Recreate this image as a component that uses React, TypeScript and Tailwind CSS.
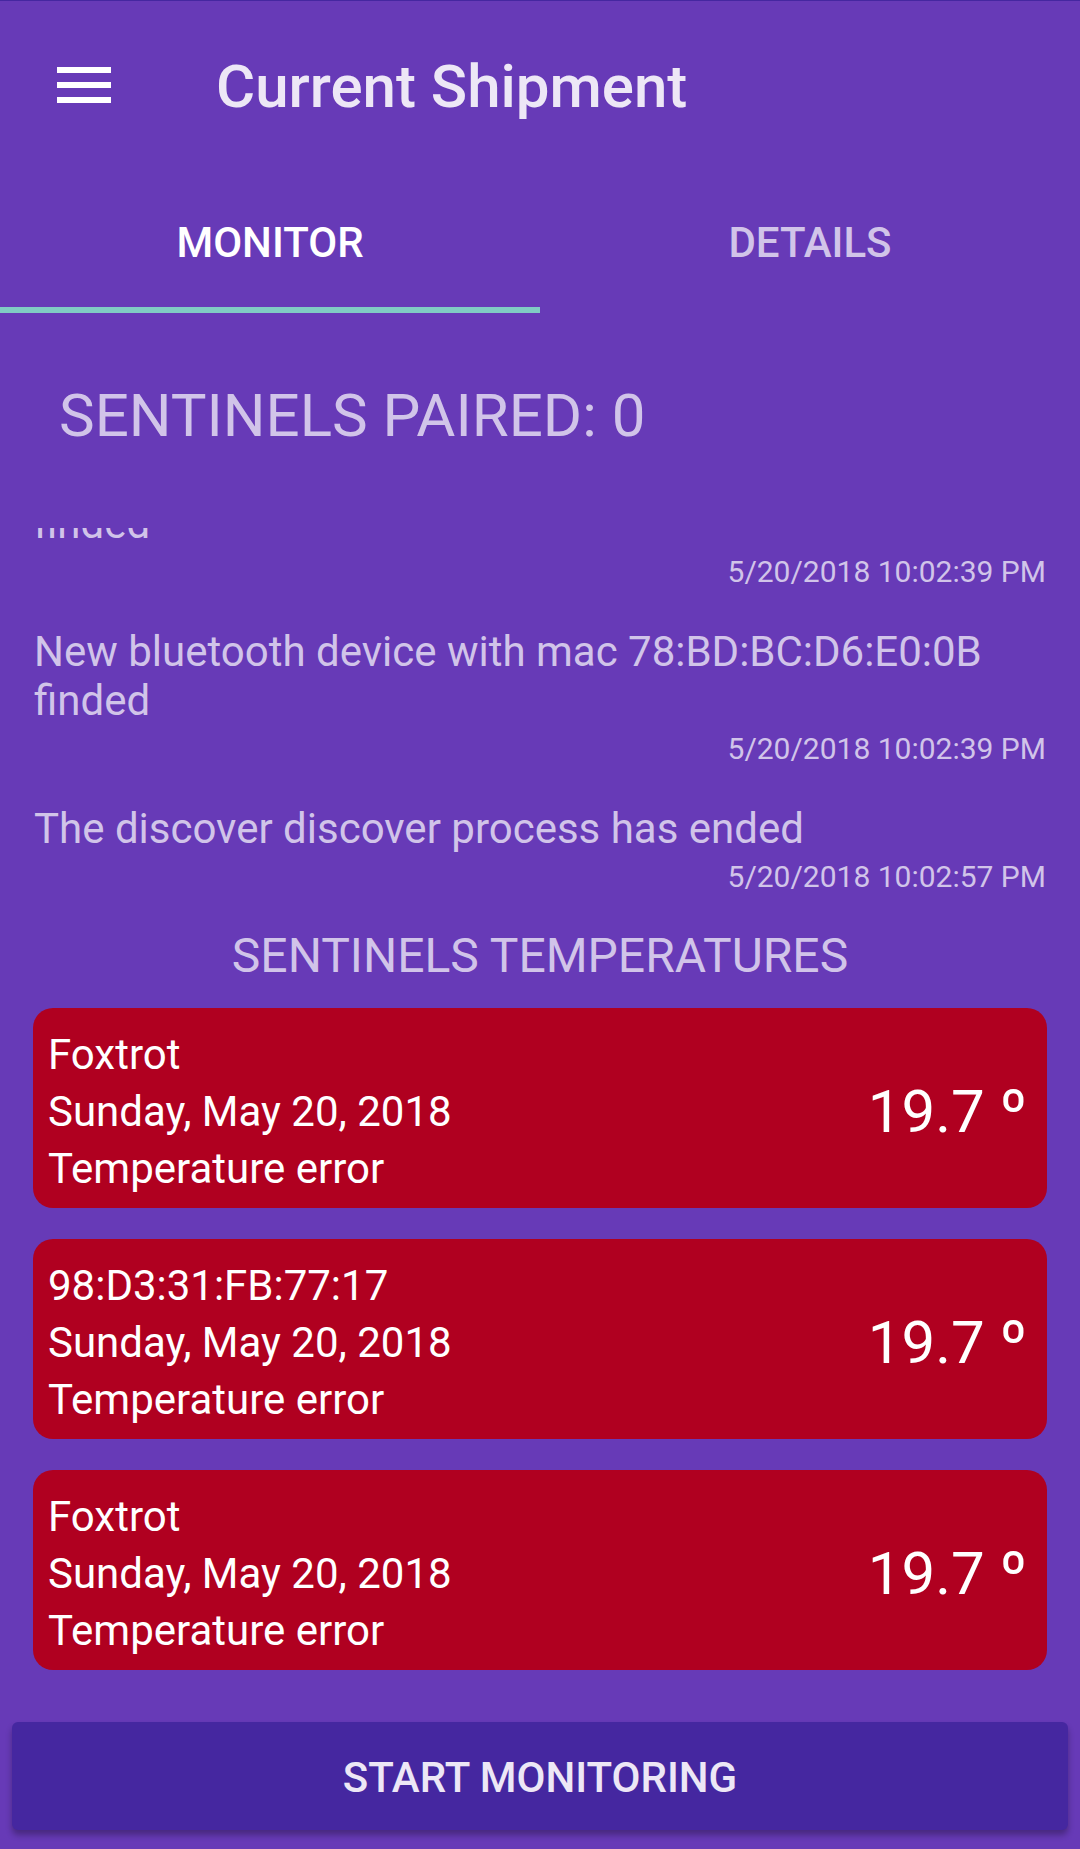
import React from 'react';

interface LogEntry {
  message: string;
  time: string;
}

interface Reading {
  name: string;
  date: string;
  status: string;
  temp: string;
}

const logs: LogEntry[] = [
  { message: 'New bluetooth device with mac 98:D3:31:FB:77:17 finded', time: '5/20/2018 10:02:39 PM' },
  { message: 'New bluetooth device with mac 78:BD:BC:D6:E0:0B finded', time: '5/20/2018 10:02:39 PM' },
  { message: 'The discover discover process has ended', time: '5/20/2018 10:02:57 PM' },
];

const readings: Reading[] = [
  { name: 'Foxtrot', date: 'Sunday, May 20, 2018', status: 'Temperature error', temp: '19.7 º' },
  { name: '98:D3:31:FB:77:17', date: 'Sunday, May 20, 2018', status: 'Temperature error', temp: '19.7 º' },
  { name: 'Foxtrot', date: 'Sunday, May 20, 2018', status: 'Temperature error', temp: '19.7 º' },
];

const MenuIcon = () => (
  <svg width="72" height="72" viewBox="0 0 24 24" fill="#ffffff">
    <path d="M3 18h18v-2H3v2zm0-5h18v-2H3v2zm0-7v2h18V6H3z" />
  </svg>
);

const App: React.FC = () => {
  return (
    <div
      className="w-[1080px] h-[1849px] overflow-hidden bg-[#673ab7] border-t border-[#4527a0] flex flex-col"
      style={{ fontFamily: 'Roboto, "Noto Sans", sans-serif' }}
    >
      {/* toolbar */}
      <div className="h-[168px] flex items-center shrink-0">
        <div className="ml-[48px] w-[72px] h-[72px]">
          <MenuIcon />
        </div>
        <h1 className="ml-[96px] mt-[3px] text-[60px] leading-[70px] font-medium text-[#ede7f6]">Current Shipment</h1>
      </div>

      {/* tabs */}
      <div className="h-[144px] flex shrink-0">
        <div className="w-1/2 flex flex-col">
          <div className="flex-1 flex items-center justify-center pt-[8px] text-[42px] font-medium text-white">MONITOR</div>
          <div className="h-[6px] bg-[#80cbc4]" />
        </div>
        <div className="w-1/2 flex items-center justify-center pt-[2px] text-[42px] font-medium text-[#d1c4e9]">
          DETAILS
        </div>
      </div>

      <div className="mt-[68px] pl-[59px] h-[70px] text-[60px] leading-[70px] text-[#d1c4e9]">SENTINELS PAIRED: 0</div>

      {/* log list, scrolled to the end */}
      <div className="mt-[77px] h-[366px] overflow-hidden flex flex-col justify-end gap-[38px] px-[34px] shrink-0">
        {logs.map((log, i) => (
          <div key={i} className="shrink-0 text-[#d1c4e9]">
            <p className="text-[42px] leading-[49px]">{log.message}</p>
            <p className="mt-[6px] text-[30px] leading-[35px] text-right">{log.time}</p>
          </div>
        ))}
      </div>

      <div className="mt-[34px] h-[56px] text-center text-[48px] leading-[56px] text-[#d1c4e9]">SENTINELS TEMPERATURES</div>

      <div className="mt-[24px] px-[33px] flex flex-col gap-[31px]">
        {readings.map((r, i) => (
          <div key={i} className="h-[200px] rounded-[20px] bg-[#b00020] flex items-center justify-between pl-[15px] pr-[20px] text-white">
            <div className="text-[42px] leading-[57px] pt-[7px]">
              <p>{r.name}</p>
              <p>{r.date}</p>
              <p>{r.status}</p>
            </div>
            <div className="text-[60px] leading-[70px] pt-[7px]">{r.temp}</div>
          </div>
        ))}
      </div>

      <button className="mt-[52px] mx-[12px] h-[108px] rounded-[6px] bg-[#4527a0] text-[#ede7f6] text-[42px] font-medium pt-[2px] shadow-[0_5px_6px_rgba(0,0,0,0.3)]">
        START MONITORING
      </button>
    </div>
  );
};

export default App;
